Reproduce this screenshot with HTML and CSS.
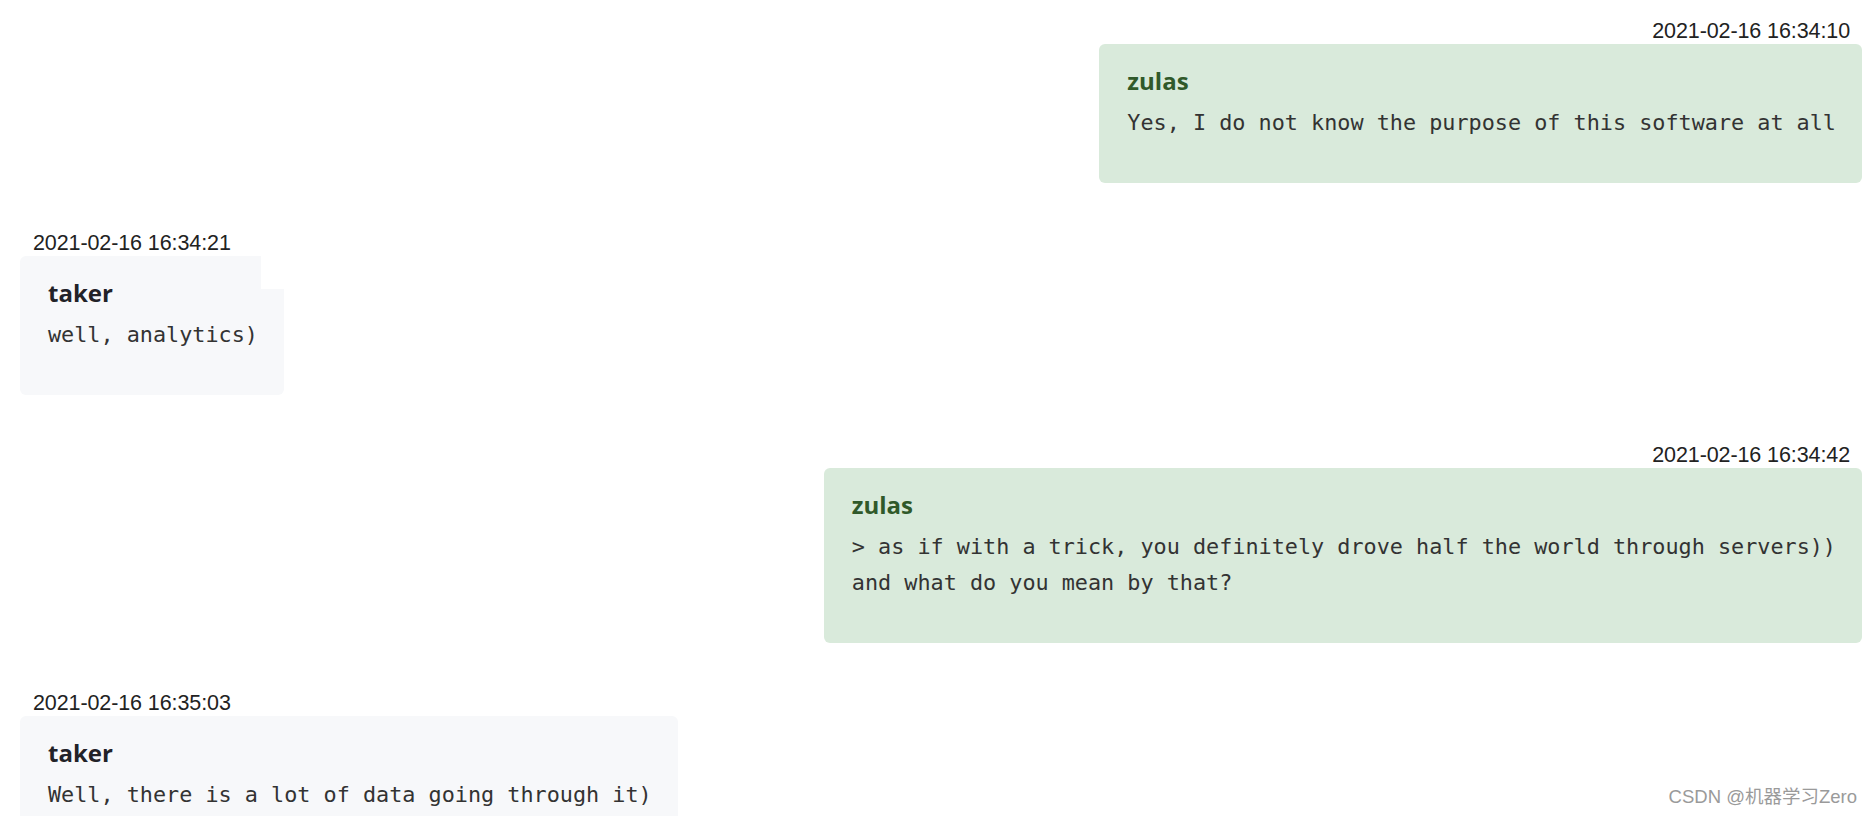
FILE: index.html
```html
<!DOCTYPE html>
<html lang="en">
<head>
<meta charset="utf-8">
<title>Chat</title>
<link rel="stylesheet" href="styles.css">
</head>
<body>
<div class="chat">
  <div class="msg msg-right">
    <div class="time">2021-02-16 16:34:10</div>
    <div class="bubble bubble-green">
      <div class="name">zulas</div>
      <div class="text">Yes, I do not know the purpose of this software at all</div>
    </div>
  </div>
  <div class="msg msg-left">
    <div class="time">2021-02-16 16:34:21</div>
    <div class="bubble bubble-gray bubble-notch">
      <div class="name">taker</div>
      <div class="text">well, analytics)</div>
    </div>
  </div>
  <div class="msg msg-right">
    <div class="time">2021-02-16 16:34:42</div>
    <div class="bubble bubble-green">
      <div class="name">zulas</div>
      <div class="text">&gt; as if with a trick, you definitely drove half the world through servers))<br>and what do you mean by that?</div>
    </div>
  </div>
  <div class="msg msg-left">
    <div class="time">2021-02-16 16:35:03</div>
    <div class="bubble bubble-gray">
      <div class="name">taker</div>
      <div class="text">Well, there is a lot of data going through it)</div>
    </div>
  </div>
</div>
<div class="watermark">CSDN @机器学习Zero</div>
</body>
</html>
```

FILE: styles.css
```css
html, body {
  margin: 0;
  padding: 0;
  background: #ffffff;
  height: 816px;
  overflow: hidden;
}

.chat {
  display: flex;
  flex-direction: column;
  gap: 48px;
  padding: 19px 10px 0 20px;
}

.msg {
  display: flex;
  flex-direction: column;
  gap: 1px;
}

.msg-right {
  align-items: flex-end;
}

.msg-left {
  align-items: flex-start;
}

.time {
  font-family: "Liberation Sans", Arial, sans-serif;
  font-size: 21.5px;
  line-height: 24px;
  color: #222222;
  letter-spacing: -0.1px;
}

.msg-right .time {
  margin-right: 12px;
}

.msg-left .time {
  margin-left: 13px;
}

.bubble {
  position: relative;
  border-radius: 6px;
  padding: 21px 26px 42px 28px;
  box-sizing: border-box;
}

.bubble-green {
  background: #d9eadb;
}

.bubble-gray {
  background: #f7f8fa;
}

.bubble-notch::after {
  content: "";
  position: absolute;
  top: 0;
  right: 0;
  width: 23px;
  height: 33px;
  background: #ffffff;
}

.name {
  font-family: "Open Sans", "Noto Sans", sans-serif;
  font-weight: 700;
  font-size: 24px;
  line-height: 32px;
  margin-bottom: 8px;
}

.bubble-green .name {
  color: #30592a;
}

.bubble-gray .name {
  color: #222228;
}

.text {
  font-family: "DejaVu Sans Mono", "Liberation Mono", monospace;
  font-size: 21.8px;
  line-height: 36px;
  color: #333333;
  white-space: nowrap;
}

.watermark {
  position: absolute;
  right: 15px;
  bottom: 8px;
  font-family: "Liberation Sans", "Noto Sans CJK SC", sans-serif;
  font-size: 18.5px;
  color: #9a9a9a;
}
```
